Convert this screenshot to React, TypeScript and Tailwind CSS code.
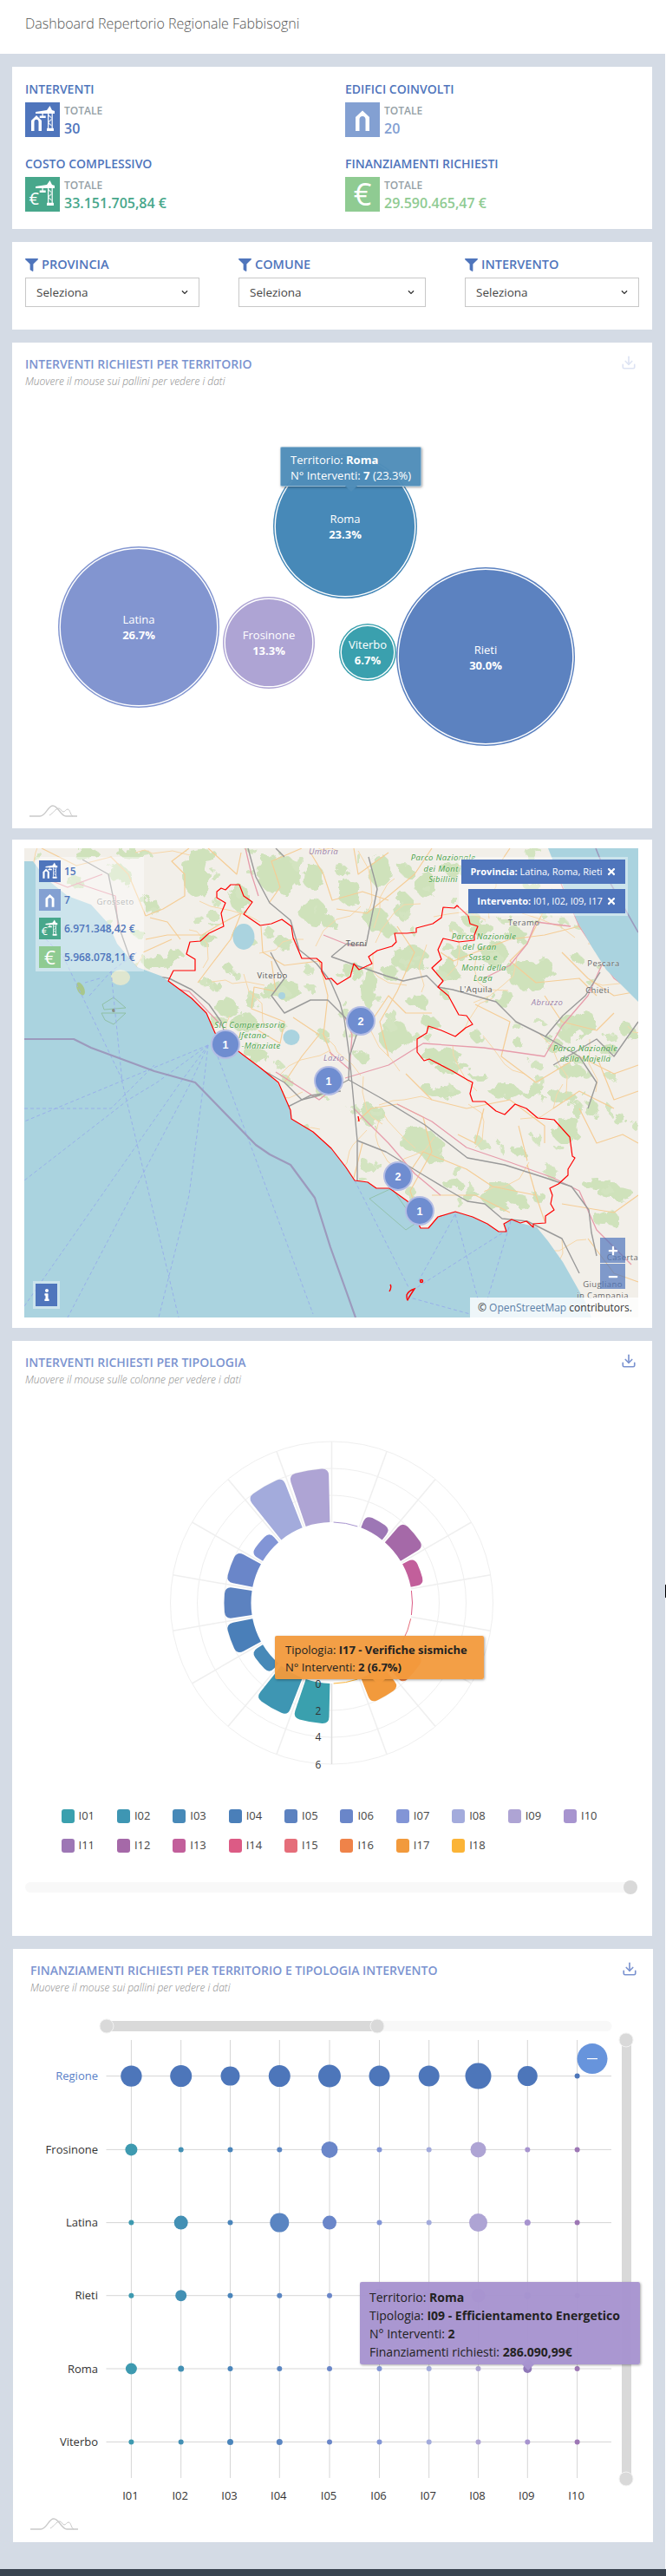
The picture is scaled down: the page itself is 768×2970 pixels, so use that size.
import React from "react";
import { Download } from "lucide-react";
import { FaFilter, FaTimes, FaInfo, FaChevronDown, FaPlus, FaMinus } from "react-icons/fa";

const ff = "font-['Open_Sans',sans-serif]";

function Crane({ euro }: { euro?: boolean }) {
  return (
    <svg viewBox="0 0 40 40" className="w-full h-full" fill="#fff">
      <path d="M12 13v-2l13-2 3.5-5 2.5 5 3 1v3z" />
      <path d="M19.5 13h1.2v2.5h3V18h-7v-2.5h2.8z" />
      <path d="M26 13h1.2v17H26zM30.6 13h1.2v17h-1.2z" />
      <path d="M27 14l3.6 3v1.6L27 21.5v1.6l3.6 3v1.6L27 25v-1.6l3.6-3v-1.6L27 16z" opacity=".7" />
      <rect x="25" y="29.8" width="8" height="3.2" rx=".5" />
      {euro ? (
        <text x="4.5" y="32" fontSize="20" fontFamily="Open Sans" fontWeight="400">€</text>
      ) : (
        <path d="M7 33V21l6-6 6 6v12h-3.5V22.5c0-1.5-1-2.7-2.5-2.7s-2.5 1.2-2.5 2.7V33z" />
      )}
    </svg>
  );
}
function Arch() {
  return (
    <svg viewBox="0 0 40 40" className="w-full h-full" fill="#fff">
      <path d="M12 33V17l8-7.5L28 17v16h-4.5V19.5c0-2-1.4-3.6-3.5-3.6s-3.5 1.6-3.5 3.6V33z" />
    </svg>
  );
}
function BigEuro() {
  return (
    <svg viewBox="0 0 40 40" className="w-full h-full" fill="#fff">
      <text x="20" y="33" textAnchor="middle" fontSize="36" fontFamily="Open Sans" fontWeight="400">€</text>
    </svg>
  );
}

function Stat({ title, icon, bg, value, color }: { title: string; icon: React.ReactNode; bg: string; value: string; color: string }) {
  return (
    <div className="h-[65px]">
      <div className="text-[14px] leading-[20px] font-semibold text-[#4f75bc]">{title}</div>
      <div className="flex mt-[5px]">
        <div className="w-[40px] h-[40px]" style={{ background: bg }}>{icon}</div>
        <div className="ml-[5px]">
          <div className="text-[12px] leading-[20px] font-semibold text-[#95a0a6]">TOTALE</div>
          <div className="text-[16px] leading-[20px] font-semibold" style={{ color }}>{value}</div>
        </div>
      </div>
    </div>
  );
}

function Filter({ label, w }: { label: string; w: string }) {
  return (
    <div className={w}>
      <div className="flex items-center h-[20px] text-[#4f75bc]">
        <FaFilter size={15} />
        <span className="ml-[4px] text-[14.5px] font-semibold">{label}</span>
      </div>
      <div className="mt-[5px] h-[34px] border border-[#c8c8c8] flex items-center justify-between pl-[12px] pr-[12px] text-[13.5px] text-[#444]">
        <span>Seleziona</span>
        <FaChevronDown size={8} className="text-[#333]" />
      </div>
    </div>
  );
}

function Heading({ title, sub, pl, faded }: { title: string; sub: string; pl: string; faded?: boolean }) {
  return (
    <div className={`${pl} pt-[15px] h-[54px] relative`}>
      <div className="text-[14px] leading-[20px] font-semibold text-[#7b93d0]">{title}</div>
      <div className="text-[12px] leading-[18px] mt-[1px] italic font-light text-[#8a8a8a]">{sub}</div>
      <Download size={18} strokeWidth={2.2} className={`absolute right-[18px] top-[14px] text-[#7b93d0] ${faded ? "opacity-25" : ""}`} />
    </div>
  );
}

function Logo({ x, y }: { x: number; y: number }) {
  return (
    <g transform={`translate(${x},${y})`} fill="none" stroke="#c9c9c9" strokeWidth="1.3">
      <path d="M0 13H12C19 13 21 1 27 1C33 1 36 13 42 13H55" />
      <path d="M23 12C27 10 30 4 34 4C36 4 37 8 39 8C41 8 42 5 44 5C47 5 47 12 50 13" strokeWidth="1" />
    </g>
  );
}

/* ---------- MAP ---------- */
let seed = 12345;
const rnd = () => {
  seed = (seed * 1664525 + 1013904223) % 4294967296;
  return seed / 4294967296;
};
const smallGreens: number[][] = Array.from({ length: 170 }, () => [rnd() * 708, rnd() * 480, 2 + rnd() * 6, 2 + rnd() * 5]);
const extraRoads: string[] = Array.from({ length: 80 }, () => {
  let x = rnd() * 708, y = rnd() * 500;
  let a = rnd() * 6.28;
  const pts: string[] = [`${x.toFixed(0)},${y.toFixed(0)}`];
  for (let i = 0; i < 4; i++) {
    a += (rnd() - 0.5) * 1.4;
    const l = 8 + rnd() * 16;
    x += Math.cos(a) * l;
    y += Math.sin(a) * l;
    pts.push(`${x.toFixed(0)},${y.toFixed(0)}`);
  }
  return pts.join(" ");
});
const greens: number[][] = [
  [70,5,15,6],[125,5,20,5],[110,30,12,10],[60,40,10,6],[197,30,15,25],[205,8,18,7],[248,57,12,15],[145,65,8,10],[148,133,10,8],[173,125,12,7],[213,107,12,6],[160,130,12,8],
  [293,30,25,22],[333,33,12,15],[300,163,18,12],[233,183,14,8],[253,200,15,10],[220,157,6,5],[237,140,5,6],[333,73,15,15],[300,110,10,6],[278,167,6,6],[270,240,12,8],[262,178,8,5],
  [374,50,14,15],[411,27,14,18],[377,140,10,10],[407,83,14,14],[437,67,12,15],[464,43,12,15],[444,127,22,15],[397,160,8,25],[421,143,10,8],[454,177,12,8],[427,217,18,18],[467,200,10,6],[491,140,10,12],[514,80,12,8],[527,93,14,8],[541,120,15,15],[567,100,12,8],[581,147,25,15],[601,140,10,12],[554,173,12,8],[627,207,15,15],[647,200,12,12],[611,227,10,8],[674,233,10,8],[481,240,25,8],[494,253,20,6],[524,263,10,4],[631,257,15,8],
  [481,280,20,8],[554,280,18,8],[587,280,15,8],[621,287,15,8],[621,327,12,12],[401,307,15,12],[454,337,22,15],[471,347,15,15],[547,400,20,16],[571,407,10,8],[594,403,8,6],[494,387,10,8],[514,400,10,6],[571,350,8,5],[661,387,18,6],[681,397,20,8],[671,427,15,10],[687,313,8,6],[654,300,8,10],[631,320,8,12],[637,300,6,10],
  [351,85,8,8],[420,95,8,8],[365,25,8,6],[440,25,8,6],[495,25,10,8],[500,120,6,8],[640,130,6,5],[695,210,8,8],[560,60,8,5],[600,60,8,6],[570,225,6,5],[520,215,7,6],[390,240,8,6],[345,215,6,6],
];
const orange: string[] = [
  "140,78 160,70 185,55 185,30 170,15 190,0","140,105 165,100 205,100 225,88 240,80 250,75","145,80 165,85 180,105","250,75 238,105 215,135 200,155","137,120 170,105",
  "273,90 275,120 300,135 340,130","285,130 290,165 265,160 262,185 300,200 295,225 270,210","250,5 245,30 212,0","320,0 285,15 295,45 283,62","330,5 345,30 355,60 390,50 420,60",
  "380,0 385,30 420,5","360,70 395,75 420,55 450,30 470,0","430,90 450,120 430,165 410,200 420,240","480,120 495,130 520,120 560,105 600,100 640,90","540,60 570,50 600,70 580,110 560,130 590,155 640,150 660,170",
  "520,180 560,200 550,240 590,270 640,240 680,260 708,250","620,120 650,150 680,170 708,165","600,170 620,200 660,210 680,190","440,260 470,290 510,300 560,290 600,320 600,340","384,315 400,300 430,295 460,310 470,350 445,395 450,410",
  "390,340 385,360 380,380","470,400 520,400 560,420","580,365 590,400 600,430","640,300 660,340 690,330 708,340","620,410 680,420 708,400","650,450 680,490 708,500","300,270 320,240 340,215 310,195",
  "400,200 420,170 440,190 470,190","430,395 460,350 510,370 540,390 590,400","20,0 60,20 100,10 120,30 140,78","340,130 350,170 345,215 355,240","500,20 540,30 560,0","660,240 680,290 708,280","500,330 520,340 530,300","570,320 580,360","610,300 640,280 680,300",
];
const pink: string[] = [
  "352,235 375,255 378,215 370,195","255,0 262,30 270,55","110,150 190,165 228,205","290,258 340,290 365,270","430,295 470,315 510,345 560,362 610,380 640,395 660,440 700,480",
  "370,265 420,250 460,225 530,230 600,240 620,205 650,170 668,130 680,110 708,100","530,150 560,135 580,110 590,85 630,90","610,20 640,90 680,150 708,170","380,300 420,340 450,375 480,400","60,40 105,55 108,90","0,25 50,45 90,30","345,100 375,112 394,112",
];
const gray: string[] = [
  "258,0 267,33 283,63 307,83 317,117 337,133 353,153 364,178 369,197 375,240 374,267","374,267 413,289 462,319 511,357 554,365 601,380 631,390 651,417 654,443 660,470",
  "137,145 167,150 193,163 213,180 227,200 235,225 250,238 277,257 300,270 320,290 340,285 374,267","67,13 97,30 110,93 123,130 137,145 ","384,337 417,350 454,373 487,393 511,407 531,410 551,427 580,430 620,450 640,490",
  "397,10 407,47 394,112 372,110 354,125","354,125 417,147 437,153 464,147 477,160 494,163 544,177 567,200 601,217 621,193 647,170 664,143","284,120 300,150 285,170 300,190 330,175 350,175 375,200",
  "388,200 375,240 384,337 384,400","300,300 330,285 365,280","601,217 640,240 660,270 650,300","290,0 300,10","610,250 660,220 680,240 708,200",
];
const sea = "M0,15 L10,15 L25,35 L50,55 L77,65 L97,87 L107,110 L130,137 L157,147 L166,153 L193,173 L210,190 L220,213 L252,238 L272,253 L292,270 L307,302 L308,312 L333,327 L353,345 L371,368 L381,383 L396,385 L406,392 L421,392 L442,407 L457,438 L466,438 L477,425 L497,419 L517,425 L534,433 L547,442 L556,442 L553,433 L562,428 L572,432 L591,437 L604,453 L621,477 L634,500 L647,523 L654,541 L0,541 Z";
const lazio = "166,153 172,141 197,141 197,128 187,122 191,108 203,107 213,98 230,90 227,75 232,63 222,57 222,50 227,46 232,48 238,42 248,42 253,55 263,62 253,76 272,89 285,87 297,82 308,90 310,103 320,127 337,127 343,132 343,142 348,151 354,150 361,157 376,148 380,133 386,140 401,133 397,125 407,118 424,113 429,108 427,98 441,98 452,97 452,92 471,87 481,80 483,68 496,69 499,66 512,78 514,87 523,90 519,100 519,106 501,108 483,104 477,117 481,128 470,138 483,153 477,160 489,170 501,192 510,193 517,203 509,207 497,217 481,210 466,205 464,213 453,220 453,235 461,245 467,243 494,257 511,267 517,270 514,283 517,292 531,292 544,303 554,307 566,295 579,300 592,311 611,313 629,333 632,355 635,357 627,370 627,377 616,387 606,392 609,400 607,410 611,417 601,424 601,432 587,433 587,437 579,430 572,432 562,428 553,433 556,442 547,442 534,433 517,425 497,419 477,425 466,438 457,438 442,407 421,392 406,392 396,385 381,383 371,368 354,346 333,327 308,312 307,302 293,270 272,253 252,238 220,213 210,190 193,173";
const dashes: string[] = [
  "212,227 0,315","212,227 153,270 120,290 0,383","212,227 180,270 0,528","212,227 192,270 50,541","212,227 207,270 190,400 155,541","223,240 333,537","100,142 113,270 178,541","381,383 444,508","497,422 454,500","497,422 524,523","557,440 444,512","561,430 531,530","441,517 514,537","75,170 100,142 130,120","20,100 45,125 113,267","0,300 100,300 150,250","87,150 70,155",
];
type L = [string, number, number, string, string?];
const labels: L[] = [
  ["Umbria",345,7,"#9a7fa8","italic"],["Grosseto",105,65,"#8d8d8d"],["Viterbo",286,150,"#555"],["Terni",383,113,"#555"],["Teramo",576,89,"#666"],["Pescara",668,136,"#666"],["Chieti",661,167,"#666"],["L'Aquila",521,166,"#555"],["Abruzzo",603,181,"#9a7fa8","italic"],["Lazio",357,245,"#9a7fa8","italic"],
  ["Parco Nazionale",483,14,"#45a045","italic"],["dei Monti",482,27,"#45a045","italic"],["Sibillini",483,39,"#45a045","italic"],
  ["Parco Nazionale",530,105,"#45a045","italic"],["del Gran",525,117,"#45a045","italic"],["Sasso e",529,129,"#45a045","italic"],["Monti della",530,141,"#45a045","italic"],["Laga",529,153,"#45a045","italic"],
  ["Parco Nazionale",647,234,"#45a045","italic"],["della Majella",647,246,"#45a045","italic"],
  ["SIC Comprensorio",260,207,"#45a045","italic"],["lfetano-",265,219,"#45a045","italic"],["-Manziate",273,231,"#45a045","italic"],
  ["Caserta",690,475,"#666"],["Giugliano",667,506,"#666"],["in Campania",667,519,"#666"],
];
const markers: [number, number, number][] = [[232,226,1],[388,199,2],[351,268,1],[431,378,2],[456,418,1]];

function MapChart() {
  const stats: [React.ReactNode, string, string][] = [
    [<Crane />, "#4f75bc", "15"],
    [<Arch />, "#83a0d2", "7"],
    [<Crane euro />, "#47a78b", "6.971.348,42 €"],
    [<BigEuro />, "#8fcb92", "5.968.078,11 €"],
  ];
  return (
    <div className="relative w-[708px] h-[541px] overflow-hidden bg-[#f2efe9]">
      <svg viewBox="0 0 708 541" className="absolute inset-0 w-full h-full">
        <defs>
          <filter id="soft"><feGaussianBlur stdDeviation="0.5" /></filter>
          <filter id="organic" x="-5%" y="-5%" width="110%" height="110%">
            <feTurbulence type="fractalNoise" baseFrequency="0.07" numOctaves="3" seed="4" result="n" />
            <feDisplacementMap in="SourceGraphic" in2="n" scale="18" />
            <feGaussianBlur stdDeviation="0.7" />
          </filter>
        </defs>
        <g filter="url(#organic)">
          {greens.map((g, i) => (
            <ellipse key={i} cx={g[0]} cy={g[1]} rx={g[2]} ry={g[3]} fill="#cfe2bb" />
          ))}
          {smallGreens.map((g, i) => (
            <ellipse key={i} cx={g[0]} cy={g[1]} rx={g[2]} ry={g[3]} fill="#d3e4c0" />
          ))}
        </g>
        <g filter="url(#soft)" fill="none" strokeLinejoin="round">
          {extraRoads.map((p, i) => <polyline key={i} points={p} stroke="#f6d6a8" strokeWidth="1" />)}
          {orange.map((p, i) => <polyline key={i} points={p} stroke="#f5cd96" strokeWidth="1.2" />)}
          {pink.map((p, i) => <polyline key={i} points={p} stroke="#e79cab" strokeWidth="1.3" />)}
          {gray.map((p, i) => <polyline key={i} points={p} stroke="#9a9a9a" strokeWidth="1.4" />)}
        </g>
        <path d={sea} fill="#aad3df" />
        <path d="M604,0 L708,0 L708,177 L671,140 L654,113 L637,83 L621,43 Z" fill="#aad3df" />
        <ellipse cx="253" cy="102" rx="12.5" ry="15" fill="#aad3df" />
        <ellipse cx="308" cy="218" rx="9.5" ry="9" fill="#aad3df" />
        <ellipse cx="297" cy="170" rx="4" ry="4" fill="#aad3df" />
        <ellipse cx="65" cy="162" rx="4" ry="8" transform="rotate(-25 65 162)" fill="#a8c78a" />
        <ellipse cx="111" cy="149" rx="11" ry="9" fill="#dfe6cf" />
        <g fill="none" stroke="#8dbd9f" strokeWidth="0.9">
          <path d="M90 180L103 172L117 184L92 186Z" />
          <path d="M89 190L117 190L103 203L93 198Z" />
        </g>
        <circle cx="103" cy="187" r="2" fill="#8a8f80" />
        <path d="M398 404L424 392L452 432L440 440Z" fill="none" stroke="#8dbd9f" strokeWidth="0.8" />
        <g fill="none" stroke="#98b0ea" strokeWidth="1" strokeDasharray="4 3">
          {dashes.map((p, i) => <polyline key={i} points={p} />)}
        </g>
        <g fill="none" stroke="#9c9abd" strokeWidth="2.2" strokeLinejoin="round">
          <polyline points="0,220 57,220 77,230 150,257 197,270 267,342 283,353 307,365 335,403 353,460 371,510 382,541" />
          <polyline points="659,0 674,37 708,97" strokeWidth="1.6" />
        </g>
        <polygon points={lazio} fill="none" stroke="#f00" strokeWidth="1.2" strokeLinejoin="round" />
        <g fill="none" stroke="#f00" strokeWidth="1.4">
          <path d="M421 511Q424 506 422 503" />
          <path d="M450 508Q443 510 441 515Q441 521 442 521Q444 517 446 514Z" />
          <circle cx="458" cy="499" r="1.5" />
          <path d="M385 309L386 315" />
        </g>
        <g fontFamily="Open Sans" fontSize="9.5" textAnchor="middle" letterSpacing="0.4" stroke="#ffffff" strokeOpacity="0.35" strokeWidth="1.2" paintOrder="stroke">
          {labels.map((l, i) => (
            <text key={i} x={l[1]} y={l[2]} fill={l[3]} fontStyle={l[4] || "normal"}>{l[0]}</text>
          ))}
        </g>
        {markers.map((m, i) => (
          <g key={i}>
            <circle cx={m[0]} cy={m[1]} r="17" fill="#b3bce4" />
            <circle cx={m[0]} cy={m[1]} r="15" fill="#6f8dd0" />
            <text x={m[0]} y={m[1] + 4.5} textAnchor="middle" fontSize="12.5" fontWeight="700" fontFamily="Liberation Sans" fill="#fff">{m[2]}</text>
          </g>
        ))}
      </svg>
      <div className="absolute left-[13px] top-[10px] w-[125px] h-[132px] bg-white/40 pl-[4px] pt-[4px] flex flex-col gap-[8px]">
        {stats.map((s, i) => (
          <div key={i} className="flex items-center h-[25px]">
            <div className="w-[25px] h-[25px] shrink-0" style={{ background: s[1] }}>{s[0]}</div>
            <span className="ml-[4px] text-[12px] font-semibold text-[#4f75bc] whitespace-nowrap">{s[2]}</span>
          </div>
        ))}
      </div>
      <div className="absolute left-[501px] top-[10px] w-[195px] h-[68px] bg-white/40 flex flex-col items-end pr-[3px] pt-[3px] gap-[6px]">
        <div className="h-[28px] w-[189px] bg-[#4f75bc] text-white text-[11px] flex items-center justify-center gap-[4px]">
          <span><b className="font-bold">Provincia:</b> Latina, Roma, Rieti</span><FaTimes size={12} />
        </div>
        <div className="h-[28px] w-[181px] bg-[#4f75bc] text-white text-[11px] flex items-center justify-center gap-[4px]">
          <span><b className="font-bold">Intervento:</b> I01, I02, I09, I17</span><FaTimes size={12} />
        </div>
      </div>
      <div className="absolute left-[664px] top-[449px] w-[29px] h-[29px] bg-[#4f75bc]/70 flex items-center justify-center text-white"><FaPlus size={12} /></div>
      <div className="absolute left-[664px] top-[479px] w-[29px] h-[29px] bg-[#4f75bc]/70 flex items-center justify-center text-white"><FaMinus size={12} /></div>
      <div className="absolute left-[10px] top-[499px] w-[31px] h-[32px] bg-white/40 p-[3px]">
        <div className="w-full h-full bg-[#4f75bc] flex items-center justify-center text-white"><FaInfo size={14} /></div>
      </div>
      <div className="absolute right-0 bottom-0 w-[194px] h-[23px] bg-white/80 pl-[9px] text-[12px] leading-[23px] text-[#333] whitespace-nowrap">
        © <span className="text-[#5a7fa8]">OpenStreetMap</span> contributors.
      </div>
    </div>
  );
}

/* ---------- RADIAL ---------- */
const C = { x: 382.5, y: 1848 };
const pt = (r: number, deg: number) => {
  const a = (deg * Math.PI) / 180;
  return [C.x + r * Math.sin(a), C.y - r * Math.cos(a)];
};
const fmt = (p: number[]) => `${p[0].toFixed(2)} ${p[1].toFixed(2)}`;
function barPath(a0: number, a1: number, r0: number, r1: number) {
  const R = Math.min(8, (r1 - r0) * 0.6);
  const da = ((R / r1) * 180) / Math.PI;
  return `M${fmt(pt(r0, a0))}L${fmt(pt(r1 - R, a0))}Q${fmt(pt(r1, a0))} ${fmt(pt(r1, a0 + da))}A${r1} ${r1} 0 0 1 ${fmt(pt(r1, a1 - da))}Q${fmt(pt(r1, a1))} ${fmt(pt(r1 - R, a1))}L${fmt(pt(r0, a1))}A${r0} ${r0} 0 0 0 ${fmt(pt(r0, a0))}Z`;
}
const cats = [
  ["I01", "#3aa0ae", 3], ["I02", "#3e96b3", 3], ["I03", "#4789b8", 1], ["I04", "#4a7fb9", 2], ["I05", "#5c82c0", 2], ["I06", "#6a86c9", 2],
  ["I07", "#8295d6", 1], ["I08", "#a3abdc", 4], ["I09", "#aea4d4", 4], ["I10", "#a794cf", 0], ["I11", "#9d77b5", 1], ["I12", "#a569a8", 2],
  ["I13", "#c25f9b", 1], ["I14", "#dc5b85", 0], ["I15", "#e56e7a", 0], ["I16", "#ef8349", 2], ["I17", "#f29a3c", 2], ["I18", "#fbb437", 0],
] as [string, string, number][];

function Radial() {
  return (
    <svg viewBox="14 1600 738 460" className="block w-[738px] h-[460px]">
      {[124, 155, 186].map((r) => <circle key={r} cx={C.x} cy={C.y} r={r} fill="none" stroke="#efefef" />)}
      {Array.from({ length: 18 }, (_, i) => {
        const d = i * 20;
        const a = pt(93, d), b = pt(186, d);
        return <line key={i} x1={a[0]} y1={a[1]} x2={b[0]} y2={b[1]} stroke={d === 180 ? "#dddddd" : "#efefef"} strokeWidth={1.5} />;
      })}
      {cats.map((c, i) => {
        const a0 = 180 + i * 20 + 1.3, a1 = 180 + (i + 1) * 20 - 1.3;
        if (c[2] === 0) {
          const s = pt(93, a0), e = pt(93, a1);
          return <path key={c[0]} d={`M${fmt(s)}A93 93 0 0 1 ${fmt(e)}`} fill="none" stroke={c[1]} strokeWidth="1" />;
        }
        return <path key={c[0]} d={barPath(a0, a1, 93, 93 + c[2] * 15.5)} fill={c[1]} />;
      })}
      <g fontFamily="Open Sans" fontSize="12" fill="#333" textAnchor="middle">
        {[[0, 1946], [2, 1977], [4, 2007], [6, 2039]].map((t) => <text key={t[0]} x="367" y={t[1]}>{t[0]}</text>)}
      </g>
    </svg>
  );
}

/* ---------- BUBBLE MATRIX ---------- */
const colX = [151.4, 208.7, 265.5, 322.3, 380, 437.5, 494.7, 551.5, 608.3, 665.6];
const rowY = [2393.6, 2478.4, 2562.6, 2646.7, 2731, 2815.4];
const rowNames = ["Regione", "Frosinone", "Latina", "Rieti", "Roma", "Viterbo"];
const dotCols = ["#3e9ab0", "#4390b4", "#4a85bb", "#5a85c2", "#6a86c9", "#8295d6", "#a3abdc", "#aea4d4", "#a794cf", "#9d77b5"];
const dotR = [
  [12.2, 12.5, 11, 12.5, 13, 12, 12, 15, 11.5, 3],
  [7, 3, 3, 3, 9.5, 3, 3, 9, 3, 3],
  [3, 8, 3, 11, 8, 3, 3, 10.5, 3.5, 3],
  [3, 6.5, 3, 3, 3, 8, 7, 8, 4, 3],
  [6.5, 3.5, 3, 3, 3, 3, 3, 3, 5, 3],
  [3, 3, 3.5, 3.5, 3, 3, 3, 3, 3, 3],
];

function Matrix() {
  return (
    <svg viewBox="15 2301 738 630" className="block w-[738px] h-[630px]">
      <rect x="115.5" y="2330" width="590" height="12" rx="6" fill="#f8f8f8" />
      <rect x="123" y="2330" width="312" height="12" fill="#d9d9d9" />
      <circle cx="123" cy="2336" r="8" fill="#d9d9d9" stroke="#f2f2f2" />
      <circle cx="435" cy="2336" r="8" fill="#d9d9d9" stroke="#f2f2f2" />
      <rect x="717" y="2352" width="11" height="506" fill="#d9d9d9" />
      <circle cx="722" cy="2352" r="8" fill="#d9d9d9" stroke="#f2f2f2" />
      <circle cx="722" cy="2858" r="8" fill="#d9d9d9" stroke="#f2f2f2" />
      {colX.map((x) => <line key={x} x1={x} x2={x} y1="2352" y2="2857" stroke="#d6d6d6" />)}
      {rowY.map((y) => <line key={y} x1="122.5" x2="705" y1={y} y2={y} stroke="#d6d6d6" />)}
      {rowY.map((y, r) =>
        colX.map((x, c) => (
          <circle key={`${r}-${c}`} cx={x} cy={y} r={dotR[r][c]} fill={r === 0 ? "#4d76ba" : r === 4 && c === 8 ? "#8f78b8" : dotCols[c]} />
        ))
      )}
      <g fontFamily="Open Sans" fontSize="13" textAnchor="end">
        {rowY.map((y, i) => (
          <text key={i} x="113" y={y + 4.5} fill={i === 0 ? "#5b7fc7" : "#333"}>{rowNames[i]}</text>
        ))}
      </g>
      <g fontFamily="Open Sans" fontSize="13" textAnchor="middle" fill="#333">
        {colX.map((x, i) => (
          <text key={i} x={x - 1} y="2882">{`I${String(i + 1).padStart(2, "0")}`}</text>
        ))}
      </g>
      <circle cx="683" cy="2373.6" r="17.5" fill="#6794dc" />
      <line x1="677" x2="689" y1="2373.6" y2="2373.6" stroke="#fff" strokeWidth="1.2" />
      <Logo x={35} y={2903} />
    </svg>
  );
}

function Tip({ cls, bg, arrowLeft, children }: { cls: string; bg: string; arrowLeft: string; children: React.ReactNode }) {
  return (
    <div className={`absolute rounded-[2px] shadow-[1px_1px_3px_rgba(0,0,0,0.35)] ${cls}`} style={{ background: bg }}>
      {children}
      <div className={`absolute -bottom-[5px] w-[10px] h-[10px] rotate-45 ${arrowLeft}`} style={{ background: bg }} />
    </div>
  );
}

export default function App() {
  return (
    <div className={`${ff} relative w-[768px] h-[2970px] bg-white overflow-hidden`}>
      <div className="h-[62px] bg-white pl-[29px] pt-[16px] text-[16px] leading-[22px] font-light text-[#555]">
        Dashboard Repertorio Regionale Fabbisogni
      </div>
      <div className="w-[767px] h-[2908px] bg-[#d4dbe5] pl-[14px] pt-[15px] flex flex-col">
        <section className="w-[738px] h-[187px] bg-white pl-[15px] pt-[16px] grid grid-cols-[369px_354px] gap-y-[21px] content-start">
          <Stat title="INTERVENTI" icon={<Crane />} bg="#4f75bc" value="30" color="#4f75bc" />
          <Stat title="EDIFICI COINVOLTI" icon={<Arch />} bg="#83a0d2" value="20" color="#83a0d2" />
          <Stat title="COSTO COMPLESSIVO" icon={<Crane euro />} bg="#47a78b" value="33.151.705,84 €" color="#47a78b" />
          <Stat title="FINANZIAMENTI RICHIESTI" icon={<BigEuro />} bg="#8fcb92" value="29.590.465,47 €" color="#8fcb92" />
        </section>
        <section className="w-[738px] h-[101px] mt-[15px] bg-white pl-[15px] pt-[16px] flex gap-[45px]">
          <Filter label="PROVINCIA" w="w-[201px]" />
          <Filter label="COMUNE" w="w-[216px]" />
          <Filter label="INTERVENTO" w="w-[201px]" />
        </section>
        <section className="relative w-[738px] h-[560px] mt-[15px] bg-white">
          <Heading pl="pl-[15px]" faded title="INTERVENTI RICHIESTI PER TERRITORIO" sub="Muovere il mouse sui pallini per vedere i dati" />
          <svg viewBox="14 449 738 506" className="block w-[738px] h-[506px]">
            {[
              [160, 723, 93, "#8295d0", "Latina", "26.7%", 714],
              [310, 741, 53, "#aea4d4", "Frosinone", "13.3%", 732],
              [398, 607, 83, "#4789b8", "Roma", "23.3%", 598],
              [424, 752, 33, "#3aa0ae", "Viterbo", "6.7%", 743],
              [560, 757, 103, "#5c82c0", "Rieti", "30.0%", 749],
            ].map((b) => (
              <g key={b[4] as string}>
                <circle cx={b[0] as number} cy={b[1] as number} r={b[2] as number} fill={b[3] as string} />
                <circle cx={b[0] as number} cy={b[1] as number} r={(b[2] as number) - 2.2} fill="none" stroke="#fff" strokeWidth="1.4" />
                <text x={b[0] as number} y={(b[6] as number) + 4.5} textAnchor="middle" fontFamily="Open Sans" fontSize="13" fill="#fff">{b[4]}</text>
                <text x={b[0] as number} y={(b[6] as number) + 22.5} textAnchor="middle" fontFamily="Open Sans" fontSize="13" fontWeight="700" fill="#fff">{b[5]}</text>
              </g>
            ))}
            <Logo x={34} y={928} />
          </svg>
          <Tip cls="left-[309px] top-[120px] w-[163px] h-[46px] pl-[11px] pt-[5px] text-white text-[13px] leading-[18px] border border-white/40" bg="rgba(79,141,185,0.97)" arrowLeft="left-[76px]">
            <div className="relative z-10">Territorio: <b>Roma</b></div>
            <div className="relative z-10">N° Interventi: <b>7</b> (23.3%)</div>
          </Tip>
        </section>
        <section className="w-[738px] h-[563px] mt-[13px] bg-white pl-[14px] pt-[10px]">
          <MapChart />
        </section>
        <section className="relative w-[738px] h-[686px] mt-[15px] bg-white">
          <Heading pl="pl-[15px]" title="INTERVENTI RICHIESTI PER TIPOLOGIA" sub="Muovere il mouse sulle colonne per vedere i dati" />
          <Radial />
          <div className="ml-[56.5px] mt-[17px] grid grid-cols-[repeat(10,64.4px)] auto-rows-[34px] text-[13px] text-[#444]">
            {cats.map((c) => (
              <div key={c[0]} className="flex items-center gap-[5px]">
                <span className="w-[15px] h-[16px] rounded-[3px]" style={{ background: c[1] }} />
                <span>{c[0]}</span>
              </div>
            ))}
          </div>
          <div className="relative ml-[14.5px] mt-[25px] w-[706px] h-[12px] rounded-full bg-[#f8f8f8]">
            <div className="absolute right-[0px] -top-[2px] w-[16px] h-[16px] rounded-full bg-[#d9d9d9]" />
          </div>
          <Tip cls="left-[303px] top-[340px] w-[241px] h-[50px] pl-[12px] pt-[6px] text-[#222] text-[13px] leading-[20px]" bg="rgba(242,154,60,0.95)" arrowLeft="left-[115px]">
            <div className="relative z-10">Tipologia: <b className="font-bold">I17 - Verifiche sismiche</b></div>
            <div className="relative z-10">N° Interventi: <b className="font-bold">2 (6.7%)</b></div>
          </Tip>
        </section>
        <section className="relative w-[738px] h-[684px] mt-[15px] ml-[1px] bg-white">
          <Heading pl="pl-[20px]" title="FINANZIAMENTI RICHIESTI PER TERRITORIO E TIPOLOGIA INTERVENTO" sub="Muovere il mouse sui pallini per vedere i dati" />
          <Matrix />
          <Tip cls="left-[400px] top-[384px] w-[323px] h-[95px] pl-[11px] pt-[7px] text-[#222] text-[14px] leading-[21px]" bg="rgba(167,148,207,0.97)" arrowLeft="left-[189px]">
            <div className="relative z-10">Territorio: <b className="font-bold">Roma</b></div>
            <div className="relative z-10">Tipologia: <b className="font-bold">I09 - Efficientamento Energetico</b></div>
            <div className="relative z-10">N° Interventi: <b className="font-bold">2</b></div>
            <div className="relative z-10">Finanziamenti richiesti: <b className="font-bold">286.090,99€</b></div>
          </Tip>
        </section>
      </div>
      <div className="absolute left-0 right-0 bottom-0 h-[8px] bg-[#3a4450]" />
      <div className="absolute left-[767px] top-[1827px] w-[1px] h-[15px] bg-black" />
    </div>
  );
}
